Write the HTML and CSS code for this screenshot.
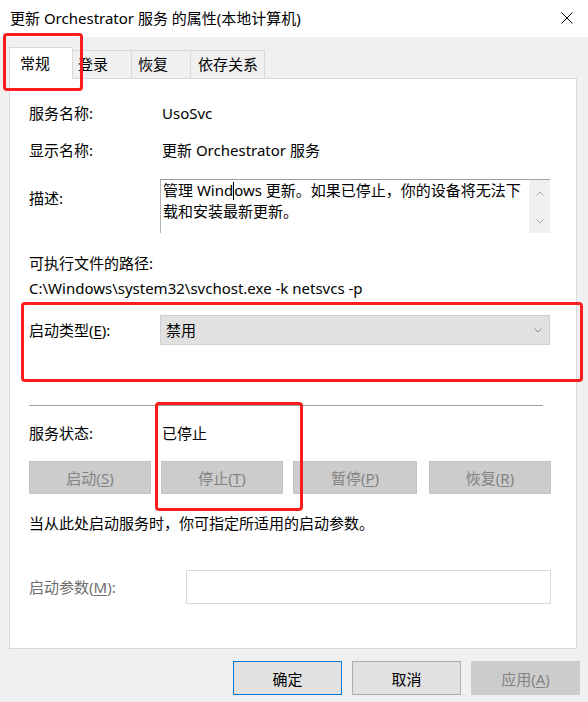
FILE: index.html
```html
<!DOCTYPE html>
<html lang="zh-CN">
<head>
    <meta charset="UTF-8">
    <meta name="viewport" content="width=device-width, initial-scale=1.0">
    <title>更新 Orchestrator 服务 的属性(本地计算机)</title>
    <link rel="stylesheet" href="styles.css">
</head>
<body>
    <div class="window">
        <div class="titlebar">
            <span class="title">更新 Orchestrator 服务 的属性(本地计算机)</span>
            <svg class="close" width="12" height="12" viewBox="0 0 12 12">
                <path d="M0.5 0.5 L11.5 11.5 M11.5 0.5 L0.5 11.5" stroke="#000" stroke-width="1" fill="none"/>
            </svg>
        </div>

        <div class="tabs">
            <div class="tab selected">常规</div>
            <div class="tab tab-login">登录</div>
            <div class="tab tab-recover">恢复</div>
            <div class="tab tab-deps">依存关系</div>
        </div>

        <div class="panel">
            <div class="row row-name">
                <span class="label">服务名称:</span>
                <span class="value">UsoSvc</span>
            </div>
            <div class="row row-display">
                <span class="label">显示名称:</span>
                <span class="value">更新 Orchestrator 服务</span>
            </div>
            <div class="row row-desc">
                <span class="label desc-label">描述:</span>
                <div class="desc-box">
                    <div class="desc-text">管理 Wind<span class="caret"></span>ows 更新。如果已停止，你的设备将无法下载和安装最新更新。</div>
                    <div class="scrollbar">
                        <svg width="8" height="5" viewBox="0 0 8 5"><path d="M0.5 4.5 L4 1 L7.5 4.5" stroke="#a6a6a6" fill="none"/></svg>
                        <svg width="8" height="5" viewBox="0 0 8 5"><path d="M0.5 0.5 L4 4 L7.5 0.5" stroke="#a6a6a6" fill="none"/></svg>
                    </div>
                </div>
            </div>
            <div class="path-label">可执行文件的路径:</div>
            <div class="path">C:\Windows\system32\svchost.exe -k netsvcs -p</div>
            <div class="row row-type">
                <span class="label">启动类型(<span class="key">E</span>):</span>
                <div class="combo">
                    <span>禁用</span>
                    <svg width="8" height="5" viewBox="0 0 8 5"><path d="M0.5 0.5 L4 4 L7.5 0.5" stroke="#8a8a8a" fill="none"/></svg>
                </div>
            </div>

            <div class="separator"></div>

            <div class="row row-status">
                <span class="label">服务状态:</span>
                <span class="value">已停止</span>
            </div>
            <div class="actions">
                <button disabled>启动(<span class="key">S</span>)</button>
                <button disabled>停止(<span class="key">T</span>)</button>
                <button disabled>暂停(<span class="key">P</span>)</button>
                <button disabled>恢复(<span class="key">R</span>)</button>
            </div>
            <div class="hint">当从此处启动服务时，你可指定所适用的启动参数。</div>
            <div class="row row-param">
                <span class="label param-label">启动参数(<span class="key">M</span>):</span>
                <div class="param-input"></div>
            </div>
        </div>

        <div class="footer">
            <button class="btn default">确定</button>
            <button class="btn">取消</button>
            <button class="btn" disabled>应用(<span class="key">A</span>)</button>
        </div>

        <!-- 红色标注框 -->
        <div class="mark mark-tab"></div>
        <div class="mark mark-type"></div>
        <div class="mark mark-stop"></div>
    </div>
</body>
</html>
```

FILE: styles.css
```css
* {
    box-sizing: border-box;
}
body {
    margin: 0;
    background-color: #f0f0f0;
    font-family: "Noto Sans", "Noto Sans CJK SC", sans-serif;
    font-size: 15px;
    line-height: 20px;
    color: #000;
}
.window {
    position: relative;
    width: 588px;
    height: 702px;
    overflow: hidden;
}
.titlebar {
    height: 37px;
    background-color: white;
    display: flex;
    align-items: center;
    justify-content: space-between;
    padding: 0 15px 0 10px;
}
.title {
    font-size: 15px;
    margin-top: -1px;
}
.close {
    display: block;
    margin-top: -1px;
}

/* 选项卡 */
.tabs {
    display: flex;
    align-items: flex-end;
    margin: 10px 0 0 9px;
    height: 31px;
}
.tab {
    height: 28px;
    line-height: 27px;
    border: 1px solid #d9d9d9;
    border-bottom: none;
    border-left: none;
    background-color: #f0f0f0;
    padding-left: 5px;
}
.tab.selected {
    height: 32px;
    line-height: 30px;
    width: 64px;
    padding-left: 10px;
    background-color: white;
    border-left: 1px solid #d9d9d9;
    margin-bottom: -1px;
    position: relative;
    z-index: 1;
}
.tab-login {
    width: 59px;
}
.tab-recover {
    width: 59px;
    padding-left: 6px;
}
.tab-deps {
    width: 74px;
    padding-left: 7px;
}

/* 主面板 */
.panel {
    margin: 0 11px 0 9px;
    height: 571px;
    background-color: white;
    border: 1px solid #d9d9d9;
    padding: 24px 0 0 19px;
}
.row {
    display: flex;
    align-items: flex-start;
}
.label {
    width: 131px;
    flex-shrink: 0;
}
.value {
    padding-left: 2px;
}
.row-display {
    margin-top: 17px;
}
.row-desc {
    margin-top: 19px;
}
.desc-label {
    margin-top: 9px;
}
.desc-box {
    width: 390px;
    height: 54px;
    display: flex;
    border-top: 1px solid #a0a0a0;
    border-left: 1px solid #b4b4b4;
}
.desc-text {
    flex: 1;
    padding: 0 8px 0 2px;
    line-height: 21px;
}
.caret {
    display: inline-block;
    width: 0;
    height: 18px;
    border-left: 1px solid #000;
    vertical-align: -4px;
}
.scrollbar {
    width: 21px;
    background-color: #f0f0f0;
    display: flex;
    flex-direction: column;
    justify-content: space-between;
    align-items: center;
    padding: 11px 0 9px;
}
.scrollbar svg {
    display: block;
}
.path-label {
    margin-top: 20px;
}
.path {
    margin-top: 5px;
}
.row-type {
    margin-top: 17px;
    align-items: center;
}
.combo {
    width: 390px;
    height: 30px;
    background-color: #e1e1e1;
    border: 1px solid #cfcfcf;
    display: flex;
    align-items: center;
    justify-content: space-between;
    padding: 0 7px 0 5px;
}
.key {
    text-decoration: underline;
    text-underline-offset: 2px;
}
.separator {
    margin-top: 60px;
    width: 514px;
    height: 1px;
    background-color: #a0a0a0;
}
.row-status {
    margin-top: 17px;
}
.actions {
    display: flex;
    gap: 10px;
    margin-top: 18px;
}
.actions button {
    width: 122px;
    height: 33px;
    background-color: #cccccc;
    border: 1px solid #c4c4c4;
    color: #838383;
    font-family: inherit;
    font-size: 15px;
    padding: 0;
}
.actions button:nth-child(3) {
    width: 124px;
    margin-right: 2px;
}
.hint {
    margin-top: 19px;
}
.row-param {
    margin-top: 37px;
    align-items: center;
}
.param-label {
    width: 157px;
    color: #6d6d6d;
}
.param-input {
    width: 365px;
    height: 34px;
    border: 1px solid #d9d9d9;
    background-color: white;
}

/* 底部按钮 */
.footer {
    display: flex;
    justify-content: flex-end;
    gap: 10px;
    margin: 12px 8px 0 0;
}
.btn {
    width: 109px;
    height: 34px;
    background-color: #e1e1e1;
    border: 1px solid #adadad;
    font-family: inherit;
    font-size: 15px;
    color: #000;
    padding: 0;
}
.btn.default {
    border: 1px solid #0078d7;
}
.btn:disabled {
    background-color: #cccccc;
    border-color: #cccccc;
    color: #838383;
}

/* 红色标注 */
.mark {
    position: absolute;
    border: 3px solid #fb1d1d;
    border-radius: 4px;
}
.mark-tab {
    left: 3px;
    top: 33px;
    width: 80px;
    height: 58px;
}
.mark-type {
    left: 21px;
    top: 302px;
    width: 562px;
    height: 80px;
}
.mark-stop {
    left: 155px;
    top: 402px;
    width: 148px;
    height: 109px;
}
```
